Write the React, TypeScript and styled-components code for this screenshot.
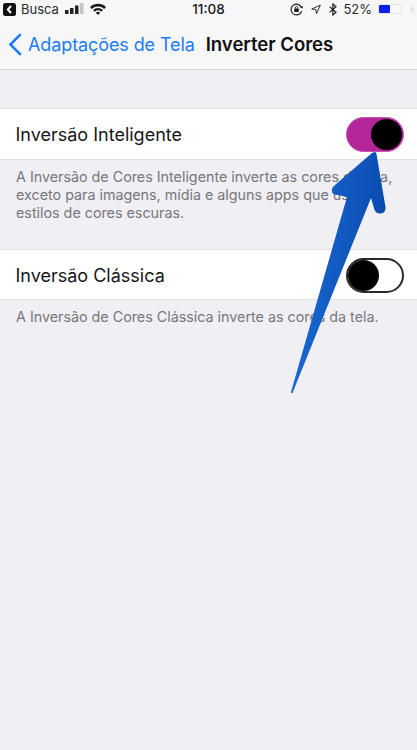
import React from "react";
import styled, { createGlobalStyle } from "styled-components";

const GlobalStyle = createGlobalStyle`
  html, body {
    margin: 0;
    padding: 0;
    background: #efeff4;
    font-family: Inter, "Liberation Sans", sans-serif;
    -webkit-font-smoothing: antialiased;
  }
`;

const Page = styled.div`
  position: relative;
  width: 417px;
  height: 750px;
  overflow: hidden;
  background: #efeff4;
`;

const Header = styled.header`
  height: 70px;
  box-sizing: border-box;
  background: #f7f7f8;
  border-bottom: 1px solid #d4d4d6;
`;

const StatusBar = styled.div`
  position: relative;
  height: 18px;
  display: flex;
  align-items: center;
  justify-content: space-between;
  padding: 0 1px 0 3px;
  font-size: 13px;
  color: #2b2b2d;
`;

const StatusGroup = styled.div<{ $gap: number }>`
  display: flex;
  align-items: center;
  gap: ${({ $gap }) => $gap}px;
`;

const Clock = styled.div`
  position: absolute;
  left: 0;
  right: 0;
  text-align: center;
  font-size: 13.5px;
  font-weight: 500;
  color: #1a1a1c;
`;

const BatteryCase = styled.div`
  width: 24px;
  height: 10px;
  box-sizing: border-box;
  border: 1px solid #e4e4e8;
  border-radius: 3px;
  background: #f7f7f8;
`;

const BatteryFill = styled.div`
  height: 100%;
  background: #0a1ff0;
  border-radius: 1px;
`;

const NavBar = styled.nav`
  height: 51px;
  padding-top: 1px;
  box-sizing: border-box;
  display: flex;
  align-items: center;
  padding-left: 8px;
`;

const BackLink = styled.a`
  display: flex;
  align-items: center;
  gap: 6px;
  color: #1a7bf6;
  font-size: 18px;
  letter-spacing: -0.1px;
`;

const NavTitle = styled.h1`
  margin: 0 0 0 11px;
  font-size: 18.6px;
  font-weight: 600;
  letter-spacing: -0.05px;
  color: #111113;
`;

const Section = styled.section<{ $top: number }>`
  margin-top: ${({ $top }) => $top}px;
`;

const Row = styled.div<{ $height: number }>`
  height: ${({ $height }) => $height}px;
  box-sizing: border-box;
  display: flex;
  align-items: center;
  justify-content: space-between;
  padding: 1px 13px 0 15.5px;
  background: #fff;
  border-top: 1px solid #e2e2e5;
  border-bottom: 1px solid #e2e2e5;
`;

const RowLabel = styled.span`
  font-size: 18px;
  color: #17171a;
`;

const Toggle = styled.div<{ $on: boolean }>`
  width: 58px;
  height: 35px;
  box-sizing: border-box;
  display: flex;
  justify-content: ${({ $on }) => ($on ? "flex-end" : "flex-start")};
  align-items: center;
  border-radius: 18px;
  padding: ${({ $on }) => ($on ? "0 1px" : "0")};
  background: ${({ $on }) => ($on ? "#b3279b" : "#fff")};
  border: ${({ $on }) => ($on ? "1px solid #c94db5" : "2px solid #2a2a2a")};
`;

const Knob = styled.div`
  width: 31px;
  height: 31px;
  border-radius: 50%;
  background: #000;
`;

const Note = styled.p`
  margin: 0;
  padding: 8px 16px 0;
  font-size: 14.3px;
  line-height: 18px;
  color: #77777c;
`;

const Arrow = styled.svg`
  position: absolute;
  left: 0;
  top: 0;
  pointer-events: none;
`;

const SignalBars = () => (
  <svg width="19" height="12" viewBox="0 0 19 12">
    <rect x="0" y="7" width="3.500" height="4" fill="#222" />
    <rect x="5" y="5" width="3.500" height="6" fill="#222" />
    <rect x="10" y="2.500" width="3.500" height="8.500" fill="#222" />
    <rect x="15" y="0" width="3.500" height="11" fill="#c4c4c6" />
  </svg>
);

const Wifi = () => (
  <svg width="16" height="12" viewBox="0 0 16 12">
    <path d="M0 4 A11.5 11.5 0 0 1 16 4 L14.2 5.9 A9 9 0 0 0 1.8 5.9Z" fill="#1c1c1e" />
    <path d="M3 7 A7.2 7.2 0 0 1 13 7 L11.2 8.8 A4.7 4.7 0 0 0 4.8 8.8Z" fill="#1c1c1e" />
    <path d="M5.8 9.7 A3.2 3.2 0 0 1 10.2 9.7 L8 12Z" fill="#1c1c1e" />
  </svg>
);

const BackToApp = () => (
  <svg width="13" height="13" viewBox="0 0 13 13">
    <rect width="13" height="13" rx="2.5" fill="#111" />
    <path d="M8 3 L4.8 6.5 L8 10" stroke="#fff" strokeWidth="2" fill="none" />
  </svg>
);

const RotationLock = () => (
  <svg width="13" height="13" viewBox="0 0 13 13" fill="none">
    <path d="M11.6 8.2 A5.4 5.4 0 1 1 11.6 4.8" stroke="#222" strokeWidth="1.2" />
    <path d="M10 4.6 L12.6 5.4 L12.8 2.8Z" fill="#222" />
    <rect x="4.2" y="5.6" width="4.6" height="3.4" rx="0.6" fill="#222" />
    <path d="M5.2 5.8 V4.7 A1.3 1.3 0 0 1 7.8 4.7 V5.8" stroke="#222" strokeWidth="0.9" />
  </svg>
);

const Location = () => (
  <svg width="10" height="11" viewBox="0 0 11 11" fill="none">
    <path d="M10.3 0.7 L0.8 5 L5.4 5.6 L6 10.2Z" stroke="#222" strokeWidth="1" strokeLinejoin="round" />
  </svg>
);

const Bluetooth = () => (
  <svg width="8" height="13" viewBox="0 0 8 13" fill="none">
    <path d="M0.6 3.6 L7 9.2 L3.9 12 V1 L7 3.8 L0.6 9.4" stroke="#222" strokeWidth="1.2" />
  </svg>
);

const Bolt = () => (
  <svg width="7" height="11" viewBox="0 0 6 11">
    <path d="M3.8 0 L0 6.2 H2.5 L1.8 11 L6 4.6 H3.3Z" fill="#e3e3e6" />
  </svg>
);

const BackChevron = () => (
  <svg width="14" height="23" viewBox="0 0 14 23" fill="none">
    <path d="M12 1.8 L2.4 11.5 L12 21.2" stroke="#1a7bf6" strokeWidth="2.6" strokeLinecap="round" />
  </svg>
);

export default function App() {
  return (
    <Page>
      <GlobalStyle />
      <Header>
        <StatusBar>
          <StatusGroup $gap={6}>
            <StatusGroup $gap={5}>
              <BackToApp />
              <span>Busca</span>
            </StatusGroup>
            <StatusGroup $gap={6}>
              <SignalBars />
              <Wifi />
            </StatusGroup>
          </StatusGroup>
          <Clock>11:08</Clock>
          <StatusGroup $gap={6}>
            <StatusGroup $gap={8}>
              <RotationLock />
              <Location />
              <Bluetooth />
            </StatusGroup>
            <span>52%</span>
            <StatusGroup $gap={7}>
              <BatteryCase>
                <BatteryFill style={{ width: "52%" }} />
              </BatteryCase>
              <Bolt />
            </StatusGroup>
          </StatusGroup>
        </StatusBar>
        <NavBar>
          <BackLink>
            <BackChevron />
            Adaptações de Tela
          </BackLink>
          <NavTitle>Inverter Cores</NavTitle>
        </NavBar>
      </Header>
      <Section $top={38}>
        <Row $height={52}>
          <RowLabel>Inversão Inteligente</RowLabel>
          <Toggle $on>
            <Knob />
          </Toggle>
        </Row>
        <Note>
          A Inversão de Cores Inteligente inverte as cores da tela,
          <br />
          exceto para imagens, mídia e alguns apps que usam
          <br />
          estilos de cores escuras.
        </Note>
      </Section>
      <Section $top={27}>
        <Row $height={51}>
          <RowLabel>Inversão Clássica</RowLabel>
          <Toggle $on={false}>
            <Knob />
          </Toggle>
        </Row>
        <Note>A Inversão de Cores Clássica inverte as cores da tela.</Note>
      </Section>
      <Arrow width="417" height="750" viewBox="0 0 417 750">
        <defs>
          <linearGradient id="arrowFill" x1="0" y1="0" x2="1" y2="0.18">
            <stop offset="0" stopColor="#1c6fd8" />
            <stop offset="0.6" stopColor="#1158c0" />
            <stop offset="1" stopColor="#0a4db0" />
          </linearGradient>
        </defs>
        <path
          d="M375 152 Q376 152 376.500 154 L385.500 207 Q386 213 381 213.500 Q376.500 214 374.500 210 L371 198 L292.500 393 Q291 394 291 392 L347 197 L338 195 Q331 195 332 189 Q332.500 187 335 185 L372 153 Q374 152 375 152 Z"
          fill="url(#arrowFill)"
        />
      </Arrow>
    </Page>
  );
}
